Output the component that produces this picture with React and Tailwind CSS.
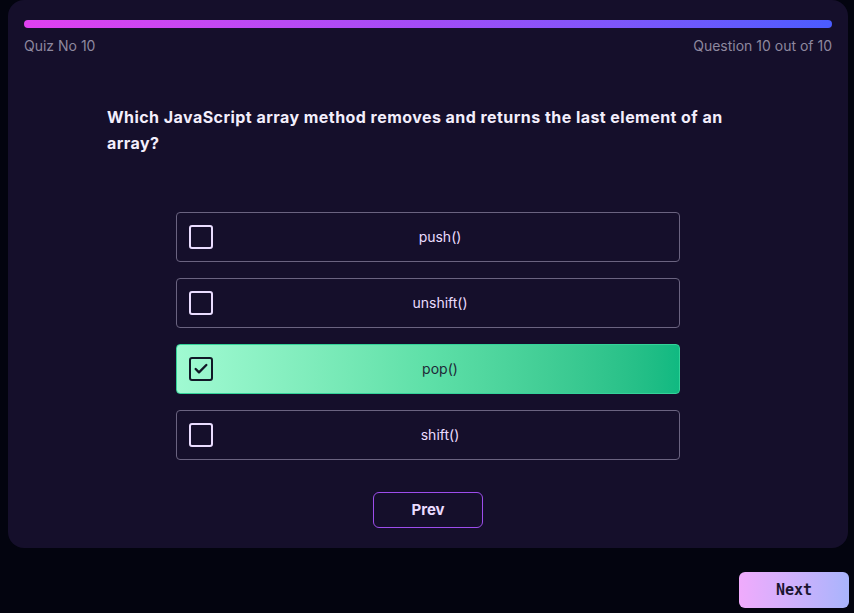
import { Check } from "lucide-react";

const options = ["push()", "unshift()", "pop()", "shift()"];
const selected = 2;

function Option({ label, active }) {
  return (
    <div
      className={
        active
          ? "flex h-[50px] items-center rounded-[4px] border border-[#34d399] bg-gradient-to-r from-[#a0fad2] via-[#5ee0a8] to-[#10b981] px-3"
          : "flex h-[50px] items-center rounded-[4px] border border-[#6a6380] bg-[#150f2b] px-3"
      }
    >
      <div
        className={
          active
            ? "flex h-6 w-6 items-center justify-center rounded-[3px] border-2 border-[#111827]"
            : "h-6 w-6 rounded-[3px] border-2 border-[#eadcff]"
        }
      >
        {active && <Check className="h-4 w-4 text-[#111827]" strokeWidth={3.5} />}
      </div>
      <div
        className={
          active
            ? "flex-1 text-center text-sm text-[#1f2937]"
            : "flex-1 text-center text-sm text-[#eadcff]"
        }
      >
        {label}
      </div>
    </div>
  );
}

export default function App() {
  return (
    <div
      className="min-h-screen bg-[#03040f] pl-2 pr-[6px]"
      style={{ fontFamily: "Inter, 'Noto Sans', sans-serif" }}
    >
      <div className="rounded-2xl bg-[#150f2b] px-4 pt-5 pb-5">
        {/* progress */}
        <div className="h-2 w-full rounded-full bg-gradient-to-r from-[#e040f0] via-[#a24cf6] to-[#4a5cff]" />
        <div className="mt-2 flex justify-between text-sm text-[#8e889f]">
          <span>Quiz No 10</span>
          <span>Question 10 out of 10</span>
        </div>

        {/* question */}
        <p className="mx-auto mt-12 w-[642px] text-base font-bold leading-[26px] tracking-[0.45px] text-[#f3eefc]">
          Which JavaScript array method removes and returns the last element of an array?
        </p>

        <div className="mx-auto mt-14 flex w-[504px] flex-col gap-4">
          {options.map((o, i) => (
            <Option key={o} label={o} active={i === selected} />
          ))}
        </div>

        <div className="mt-8 flex justify-center">
          <button className="h-9 w-[110px] rounded-md border border-[#9d4dec] text-[15px] font-bold text-[#eadcff]">
            Prev
          </button>
        </div>
      </div>

      <div className="mt-6 flex justify-end">
        <button
          className="-mr-px h-9 w-[110px] rounded-md bg-gradient-to-r from-[#f0abfc] to-[#a8b4fc] text-[15px] font-bold text-[#1a1530]"
          style={{ fontFamily: "'DejaVu Sans Mono', monospace" }}
        >
          Next
        </button>
      </div>
    </div>
  );
}
